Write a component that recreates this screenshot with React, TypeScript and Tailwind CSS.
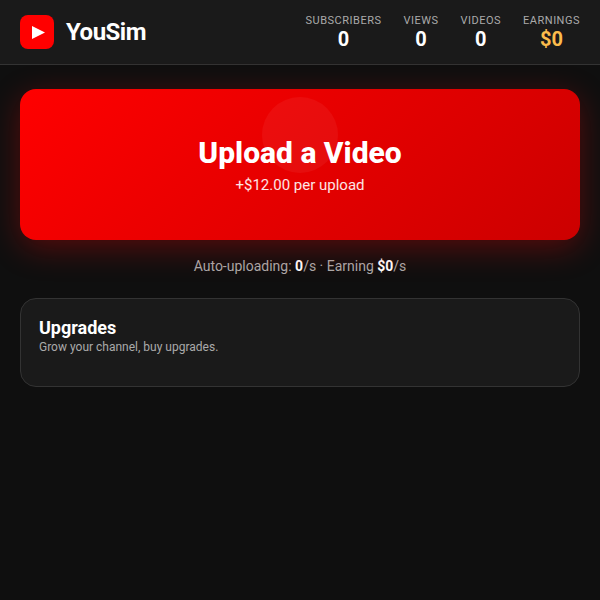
export default function App() {
  const stats = [
    { label: "SUBSCRIBERS", value: "0" },
    { label: "VIEWS", value: "0" },
    { label: "VIDEOS", value: "0" },
    { label: "EARNINGS", value: "$0", gold: true },
  ];
  return (
    <div className="min-h-[600px] bg-[#0f0f0f] text-white font-['Roboto',sans-serif]">
      <header className="h-[65px] bg-[#1a1a1a] border-b border-[#333333] flex items-center justify-between px-5">
        <div className="flex items-center gap-3">
          <div className="w-[34px] h-[34px] rounded-lg bg-[#ff0000] flex items-center justify-center">
            <svg className="ml-[3px]" width="13" height="13" viewBox="0 0 13 13"><path d="M0 0 L13 6.5 L0 13 Z" fill="#fff" /></svg>
          </div>
          <span className="text-2xl font-bold leading-8 tracking-[-0.5px]">YouSim</span>
        </div>
        <div className="flex gap-[22px]">
          {stats.map((s) => (
            <div key={s.label} className="flex flex-col items-center">
              <span className="text-[11px] leading-[13px] tracking-[0.5px] text-[#aaaaaa]">{s.label}</span>
              <span className={`text-xl font-bold leading-6 ${s.gold ? "text-[#fbbc4c]" : "text-white"}`}>{s.value}</span>
            </div>
          ))}
        </div>
      </header>
      <main className="p-5 pt-6 flex flex-col">
        <div className="relative overflow-hidden h-[151px] rounded-2xl bg-[linear-gradient(135deg,#ff0000,#cc0000)] shadow-[0_8px_32px_rgba(255,0,0,0.3)] flex flex-col items-center justify-center">
          <div className="absolute left-[242px] top-[8px] w-[76px] h-[76px] rounded-full bg-white/5" />
          <span className="relative text-[30px] font-extrabold leading-[36px]">Upload a Video</span>
          <span className="relative text-[15px] leading-[18px] mt-[5px] text-white/90">+$12.00 per upload</span>
        </div>
        <p className="mt-[17px] text-center text-sm leading-[18px] text-[#aaaaaa]">
          Auto-uploading: <b className="font-bold text-white">0</b>/s · Earning <b className="font-bold text-white">$0</b>/s
        </p>
        <section className="mt-[23px] h-[89px] rounded-2xl bg-[#1a1a1a] border border-[#333333] px-[18px] pt-[18px]">
          <h2 className="text-lg font-bold leading-[21px]">Upgrades</h2>
          <p className="text-xs leading-[16px] mt-px text-[#aaaaaa]">Grow your channel, buy upgrades.</p>
        </section>
      </main>
    </div>
  );
}
